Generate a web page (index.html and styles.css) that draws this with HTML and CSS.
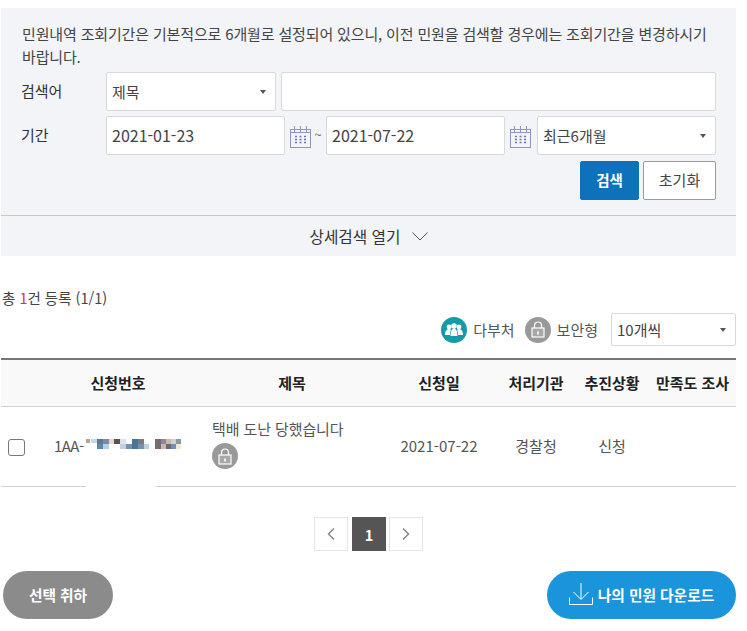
FILE: index.html
```html
<!DOCTYPE html>
<html lang="ko">
<head>
<meta charset="utf-8">
<title>민원내역</title>
<link rel="stylesheet" href="styles.css">
</head>
<body>
<main class="page">
  <section class="panel">
    <div class="panel-body">
      <p class="notice">민원내역 조회기간은 기본적으로 6개월로 설정되어 있으니, 이전 민원을 검색할 경우에는 조회기간을 변경하시기 바랍니다.</p>
      <div class="form-row">
        <span class="label">검색어</span>
        <div class="field select w-170">제목<i class="caret"></i></div>
        <div class="field grow"></div>
      </div>
      <div class="form-row">
        <span class="label">기간</span>
        <div class="field date">2021-01-23</div>
        <svg class="cal" width="21" height="22" viewBox="0 0 21 22" fill="none" stroke="#8f94c4"><rect x="0.5" y="3.5" width="20" height="18"/><path d="M4.5 0v6M10.5 0v6M16.5 0v6M0 6.5h21"/><path d="M5 10.5h2M9.5 10.5h2M14 10.5h2M5 13.5h2M9.5 13.5h2M14 13.5h2M5 16.5h2M9.5 16.5h2M14 16.5h2" stroke="#7075b0" stroke-width="1.4"/></svg>
        <span class="tilde">~</span>
        <div class="field date">2021-07-22</div>
        <svg class="cal" width="21" height="22" viewBox="0 0 21 22" fill="none" stroke="#8f94c4"><rect x="0.5" y="3.5" width="20" height="18"/><path d="M4.5 0v6M10.5 0v6M16.5 0v6M0 6.5h21"/><path d="M5 10.5h2M9.5 10.5h2M14 10.5h2M5 13.5h2M9.5 13.5h2M14 13.5h2M5 16.5h2M9.5 16.5h2M14 16.5h2" stroke="#7075b0" stroke-width="1.4"/></svg>
        <div class="field select period">최근6개월<i class="caret"></i></div>
      </div>
      <div class="actions">
        <button class="btn primary" type="button">검색</button>
        <button class="btn" type="button">초기화</button>
      </div>
    </div>
    <div class="toggle">상세검색 열기
      <svg width="16" height="9" viewBox="0 0 16 9" fill="none" stroke="#555"><path d="M0.5 0.5L8 8L15.5 0.5"/></svg>
    </div>
  </section>

  <p class="total">총 <em>1</em>건 등록 (1/1)</p>

  <div class="legend">
    <span class="badge teal">
      <svg width="18" height="14" viewBox="0 0 18 14" fill="#fff"><circle cx="4" cy="4" r="2.4"/><circle cx="14" cy="4" r="2.4"/><circle cx="9" cy="3" r="2.8"/><path d="M0 12c0-4 2-6 4-6 1 0 1.500.4 2 1-1 1.500-1 3-1 5zM18 12c0-4-2-6-4-6-1 0-1.500.4-2 1 1 1.500 1 3 1 5zM5.500 13c0-5 1.500-7.500 3.500-7.500s3.500 2.500 3.500 7.500z"/></svg>
    </span>
    <span class="legend-text">다부처</span>
    <span class="badge gray">
      <svg width="14" height="17" viewBox="0 0 14 17" fill="none" stroke="#fff" stroke-width="1.200"><path d="M3.500 7V4.500a3.500 3.500 0 0 1 7 0V7"/><rect x="1" y="7" width="12" height="9" fill="#fff" fill-opacity="0.15"/><path d="M7 10.500v3" stroke-width="1.600"/></svg>
    </span>
    <span class="legend-text last">보안형</span>
    <div class="field select page-size">10개씩<i class="caret"></i></div>
  </div>

  <div class="table">
    <div class="tr head">
      <div></div>
      <div>신청번호</div>
      <div>제목</div>
      <div>신청일</div>
      <div>처리기관</div>
      <div>추진상황</div>
      <div>만족도 조사</div>
    </div>
    <div class="tr row">
      <div><span class="check"></span></div>
      <div class="num">1AA-<svg class="mosaic" width="95" height="16" viewBox="0 0 95 16"><rect x="0" y="1" width="4" height="4" fill="#b5a595"/><rect x="5" y="1" width="6" height="4" fill="#bcdcec"/><rect x="11" y="1" width="6" height="5" fill="#5a7a9a"/><rect x="11" y="6" width="6" height="5" fill="#5f88aa"/><rect x="17" y="1" width="6" height="5" fill="#7a8c9e"/><rect x="17" y="6" width="6" height="5" fill="#b0d2e6"/><rect x="23" y="1" width="5" height="5" fill="#e4d8cc"/><rect x="28" y="1" width="6" height="5" fill="#5c5050"/><rect x="34" y="6" width="6" height="5" fill="#bed0e2"/><rect x="34" y="1" width="6" height="5" fill="#d8e4ee"/><rect x="40" y="6" width="6" height="5" fill="#7890b2"/><rect x="46" y="1" width="6" height="10" fill="#4a7498"/><rect x="52" y="1" width="6" height="5" fill="#7a7a80"/><rect x="52" y="6" width="6" height="5" fill="#7a90aa"/><rect x="58" y="6" width="5" height="5" fill="#bcd0e0"/><rect x="69" y="1" width="6" height="10" fill="#756c74"/><rect x="75" y="1" width="5" height="5" fill="#8a86a0"/><rect x="80" y="1" width="5" height="5" fill="#d0b8a4"/><rect x="75" y="6" width="5" height="5" fill="#c8b8b0"/><rect x="80" y="6" width="5" height="5" fill="#6c6870"/><rect x="85" y="1" width="5" height="5" fill="#c8d4dc"/><rect x="85" y="6" width="5" height="5" fill="#6c94b4"/><rect x="90" y="1" width="5" height="5" fill="#889aa0"/><rect x="90" y="6" width="5" height="5" fill="#f4e8d4"/></svg></div>
      <div class="subject">
        <span>택배 도난 당했습니다</span>
        <span class="badge gray">
          <svg width="14" height="17" viewBox="0 0 14 17" fill="none" stroke="#fff" stroke-width="1.200"><path d="M3.500 7V4.500a3.500 3.500 0 0 1 7 0V7"/><rect x="1" y="7" width="12" height="9" fill="#fff" fill-opacity="0.15"/><path d="M7 10.500v3" stroke-width="1.600"/></svg>
        </span>
      </div>
      <div>2021-07-22</div>
      <div>경찰청</div>
      <div>신청</div>
      <div></div>
      <i class="line-gap"></i>
    </div>
  </div>

  <nav class="pager">
    <span class="pg"><svg width="8" height="12" viewBox="0 0 8 12" fill="none" stroke="#888" stroke-width="1.500"><path d="M7 0.500L1.500 6L7 11.500"/></svg></span>
    <span class="pg current">1</span>
    <span class="pg"><svg width="8" height="12" viewBox="0 0 8 12" fill="none" stroke="#888" stroke-width="1.500"><path d="M1 0.500L6.500 6L1 11.500"/></svg></span>
  </nav>

  <div class="bottom">
    <button class="pill gray-pill" type="button">선택 취하</button>
    <button class="pill blue-pill" type="button">
      <svg width="24" height="22" viewBox="0 0 24 22" fill="none" stroke="#fff"><path d="M12 0v16M4.500 9L12 16.500L19.500 9M0.500 14.500V21.500H23.500V14.500"/></svg>
      나의 민원 다운로드
    </button>
  </div>
</main>
</body>
</html>
```

FILE: styles.css
```css
* { box-sizing: border-box; }
html, body { margin: 0; padding: 0; background: #fff; }
body {
  font-family: "Noto Sans CJK KR", "Noto Sans", sans-serif;
  font-size: 15px;
  color: #333;
  width: 747px;
  height: 631px;
  overflow: hidden;
}
.page { width: 735px; margin-left: 1px; padding-top: 8px; }

.panel { background: #f2f4f8; height: 248px; }
.panel-body { height: 208px; padding: 14px 20px 0 21px; border-bottom: 1px solid #c8c8c8; }
.notice { margin: 0; line-height: 23px; height: 46px; font-size: 15px; color: #444; letter-spacing: -0.15px; word-break: keep-all; }
.form-row { display: flex; align-items: center; height: 39px; }
.notice + .form-row { margin-top: 4px; }
.form-row + .form-row { margin-top: 5px; }
.label { width: 85px; margin-left: -1px; font-size: 15px; color: #333; margin-top: -2px; flex: none; }

.field {
  background: #fff;
  border: 1px solid #d9d9d9;
  border-radius: 2px;
  height: 39px;
  line-height: 37px;
  padding-left: 5px;
  font-size: 15px;
  color: #444;
  position: relative;
  flex: none;
}
.grow { flex: 1; margin-left: 5px; }
.w-170 { width: 170px; }
.date { width: 179px; font-size: 16px; }
.cal { margin: 2px 3px 0 5px; flex: none; }
.tilde { width: 8px; flex: none; font-size: 13px; color: #666; margin-right: 4px; margin-top: -2px; text-align: center; }
.period { width: 179px; margin-left: 3px; }
.caret {
  position: absolute;
  right: 9px;
  top: 17px;
  width: 0;
  height: 0;
  border-left: 3.500px solid transparent;
  border-right: 3.500px solid transparent;
  border-top: 4px solid #555;
}

.actions { display: flex; justify-content: flex-end; gap: 4px; margin-top: 6px; }
.btn {
  font: inherit;
  height: 39px;
  width: 73px;
  background: #fff;
  border: 1px solid #999;
  border-radius: 2px;
  color: #444;
  padding: 0 0 2px;
}
.btn.primary { width: 59px; background: #0d72ba; border-color: #0d72ba; color: #fff; font-weight: 700; font-size: 14.5px; }

.toggle {
  height: 40px;
  display: flex;
  align-items: center;
  justify-content: center;
  gap: 11px;
  font-size: 15.700px;
  color: #333;
}

.total { margin: 32px 0 0 1px; height: 20px; line-height: 20px; font-size: 14.5px; color: #444; }
.total em { font-style: normal; color: #d03a3a; }

.legend { display: flex; align-items: center; justify-content: flex-end; height: 33px; margin-top: 5px; }
.badge {
  width: 26px;
  height: 26px;
  border-radius: 50%;
  display: inline-flex;
  align-items: center;
  justify-content: center;
  flex: none;
}
.teal { background: #149aa8; }
.gray { background: #999; }
.legend-text { font-size: 15px; color: #555; margin: 0 10px 0 6px; }
.legend-text.last { margin-right: 13px; }
.page-size { width: 125px; height: 33px; line-height: 31px; }
.page-size .caret { top: 14px; }

.table { margin-top: 12px; }
.tr {
  display: grid;
  grid-template-columns: 32px 170px 178px 116px 78px 74px 87px;
  align-items: center;
  text-align: center;
}
.head {
  height: 49px;
  border-top: 2px solid #777;
  border-bottom: 1px solid #d2d2d2;
  background: #f9f9f9;
  font-weight: 700;
  color: #222;
  padding-bottom: 2px;
}
.row {
  height: 80px;
  border-bottom: 1px solid #d2d2d2;
  color: #555;
  position: relative;
  padding-bottom: 2px;
}
.check {
  display: block;
  width: 17px;
  height: 17px;
  margin-left: 7px;
  margin-top: 4px;
  border: 1px solid #777;
  border-radius: 3px;
  background: #fff;
}
.num {
  display: flex;
  align-items: center;
  padding-left: 21px;
  margin-right: -30px;
  letter-spacing: -0.5px;
}
.mosaic { flex: none; margin-top: 0; margin-left: 2px; filter: blur(0.4px); }
.subject {
  display: flex;
  flex-direction: column;
  align-items: flex-start;
  gap: 3px;
  padding-left: 9px;
  line-height: 22px;
  letter-spacing: -0.1px;
  margin-top: -4px;
}
.line-gap {
  position: absolute;
  left: 85px;
  bottom: -1px;
  width: 70px;
  height: 1px;
  background: #fff;
}

.pager { display: flex; justify-content: center; margin: 30px 0 0; gap: 3px; }
.pg {
  width: 34px;
  height: 34px;
  border: 1px solid #e6e6e6;
  display: flex;
  align-items: center;
  justify-content: center;
  background: #fff;
}
.pg.current {
  background: #555;
  border-color: #555;
  color: #fff;
  font-weight: 700;
  font-size: 14.500px;
  margin-left: 1px;
}

.bottom { display: flex; justify-content: space-between; margin-top: 20px; padding-left: 2px; }
.pill {
  font: inherit;
  height: 48px;
  border: 0;
  border-radius: 24px;
  color: #fff;
  font-weight: 700;
  font-size: 14.700px;
  padding: 0 0 2px;
  display: flex;
  align-items: center;
  justify-content: center;
}
.gray-pill { width: 110px; background: #8b8b8b; }
.blue-pill { width: 189px; background: #1a95dc; gap: 5px; }
```
